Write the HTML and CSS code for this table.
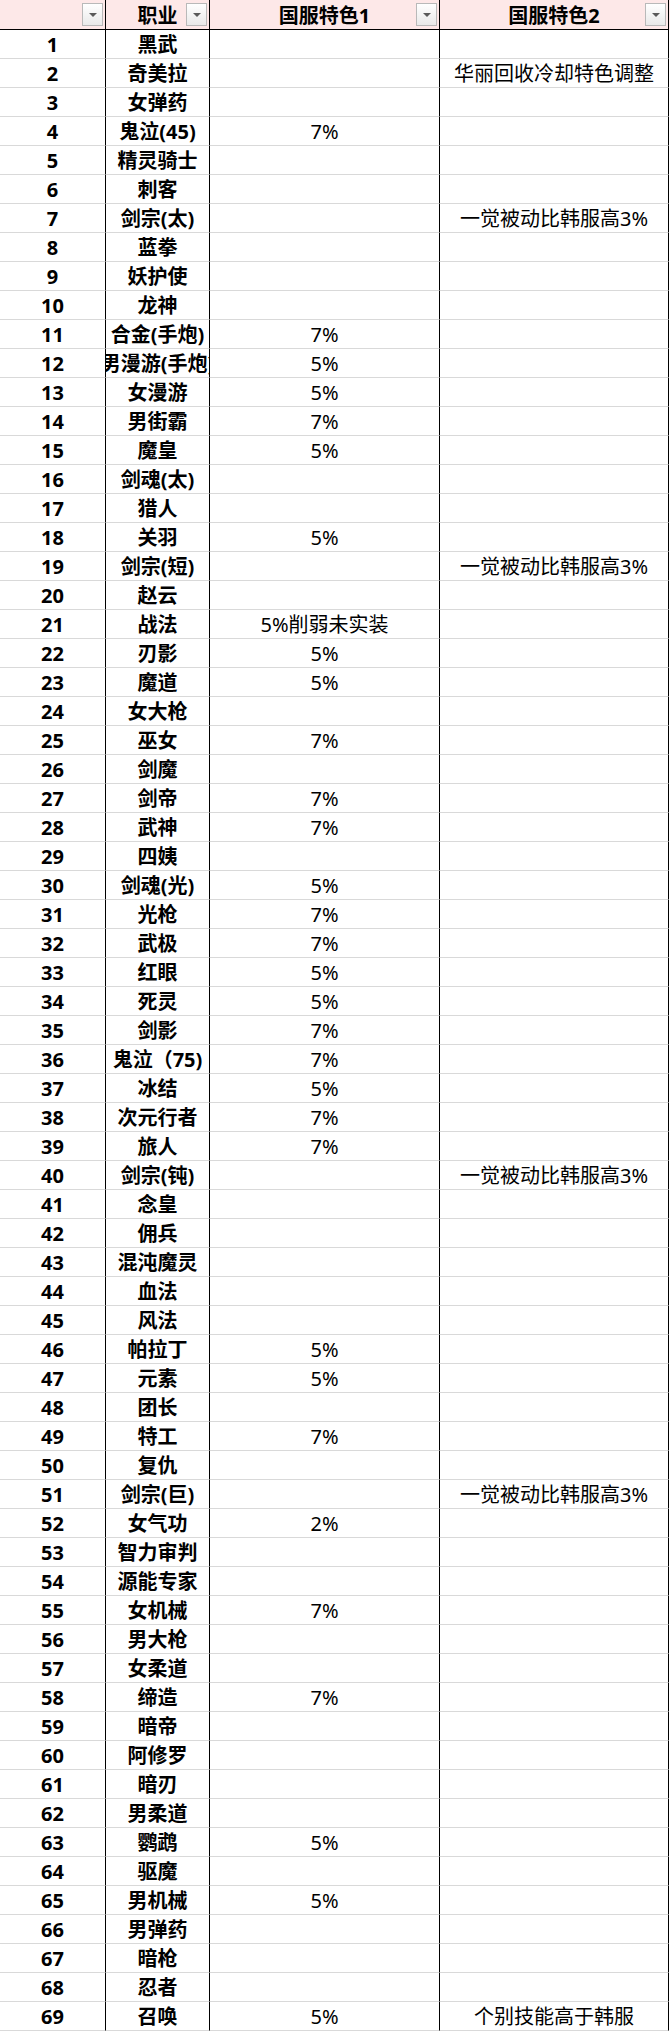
FILE: index.html
```html
<!DOCTYPE html>
<html lang="zh-CN">
<head>
<meta charset="utf-8">
<title>国服特色</title>
<link rel="stylesheet" href="styles.css">
</head>
<body>
<div class="sheet">
  <div class="row head">
    <div class="cell"><span class="filter"></span></div>
    <div class="cell">职业<span class="filter"></span></div>
    <div class="cell">国服特色1<span class="filter"></span></div>
    <div class="cell">国服特色2<span class="filter"></span></div>
  </div>
  <div class="row"><div class="cell b">1</div><div class="cell b">黑武</div><div class="cell"></div><div class="cell"></div></div>
  <div class="row"><div class="cell b">2</div><div class="cell b">奇美拉</div><div class="cell"></div><div class="cell">华丽回收冷却特色调整</div></div>
  <div class="row"><div class="cell b">3</div><div class="cell b">女弹药</div><div class="cell"></div><div class="cell"></div></div>
  <div class="row"><div class="cell b">4</div><div class="cell b">鬼泣(45)</div><div class="cell">7%</div><div class="cell"></div></div>
  <div class="row"><div class="cell b">5</div><div class="cell b">精灵骑士</div><div class="cell"></div><div class="cell"></div></div>
  <div class="row"><div class="cell b">6</div><div class="cell b">刺客</div><div class="cell"></div><div class="cell"></div></div>
  <div class="row"><div class="cell b">7</div><div class="cell b">剑宗(太)</div><div class="cell"></div><div class="cell">一觉被动比韩服高3%</div></div>
  <div class="row"><div class="cell b">8</div><div class="cell b">蓝拳</div><div class="cell"></div><div class="cell"></div></div>
  <div class="row"><div class="cell b">9</div><div class="cell b">妖护使</div><div class="cell"></div><div class="cell"></div></div>
  <div class="row"><div class="cell b">10</div><div class="cell b">龙神</div><div class="cell"></div><div class="cell"></div></div>
  <div class="row"><div class="cell b">11</div><div class="cell b">合金(手炮)</div><div class="cell">7%</div><div class="cell"></div></div>
  <div class="row"><div class="cell b">12</div><div class="cell b">男漫游(手炮)</div><div class="cell">5%</div><div class="cell"></div></div>
  <div class="row"><div class="cell b">13</div><div class="cell b">女漫游</div><div class="cell">5%</div><div class="cell"></div></div>
  <div class="row"><div class="cell b">14</div><div class="cell b">男街霸</div><div class="cell">7%</div><div class="cell"></div></div>
  <div class="row"><div class="cell b">15</div><div class="cell b">魔皇</div><div class="cell">5%</div><div class="cell"></div></div>
  <div class="row"><div class="cell b">16</div><div class="cell b">剑魂(太)</div><div class="cell"></div><div class="cell"></div></div>
  <div class="row"><div class="cell b">17</div><div class="cell b">猎人</div><div class="cell"></div><div class="cell"></div></div>
  <div class="row"><div class="cell b">18</div><div class="cell b">关羽</div><div class="cell">5%</div><div class="cell"></div></div>
  <div class="row"><div class="cell b">19</div><div class="cell b">剑宗(短)</div><div class="cell"></div><div class="cell">一觉被动比韩服高3%</div></div>
  <div class="row"><div class="cell b">20</div><div class="cell b">赵云</div><div class="cell"></div><div class="cell"></div></div>
  <div class="row"><div class="cell b">21</div><div class="cell b">战法</div><div class="cell">5%削弱未实装</div><div class="cell"></div></div>
  <div class="row"><div class="cell b">22</div><div class="cell b">刃影</div><div class="cell">5%</div><div class="cell"></div></div>
  <div class="row"><div class="cell b">23</div><div class="cell b">魔道</div><div class="cell">5%</div><div class="cell"></div></div>
  <div class="row"><div class="cell b">24</div><div class="cell b">女大枪</div><div class="cell"></div><div class="cell"></div></div>
  <div class="row"><div class="cell b">25</div><div class="cell b">巫女</div><div class="cell">7%</div><div class="cell"></div></div>
  <div class="row"><div class="cell b">26</div><div class="cell b">剑魔</div><div class="cell"></div><div class="cell"></div></div>
  <div class="row"><div class="cell b">27</div><div class="cell b">剑帝</div><div class="cell">7%</div><div class="cell"></div></div>
  <div class="row"><div class="cell b">28</div><div class="cell b">武神</div><div class="cell">7%</div><div class="cell"></div></div>
  <div class="row"><div class="cell b">29</div><div class="cell b">四姨</div><div class="cell"></div><div class="cell"></div></div>
  <div class="row"><div class="cell b">30</div><div class="cell b">剑魂(光)</div><div class="cell">5%</div><div class="cell"></div></div>
  <div class="row"><div class="cell b">31</div><div class="cell b">光枪</div><div class="cell">7%</div><div class="cell"></div></div>
  <div class="row"><div class="cell b">32</div><div class="cell b">武极</div><div class="cell">7%</div><div class="cell"></div></div>
  <div class="row"><div class="cell b">33</div><div class="cell b">红眼</div><div class="cell">5%</div><div class="cell"></div></div>
  <div class="row"><div class="cell b">34</div><div class="cell b">死灵</div><div class="cell">5%</div><div class="cell"></div></div>
  <div class="row"><div class="cell b">35</div><div class="cell b">剑影</div><div class="cell">7%</div><div class="cell"></div></div>
  <div class="row"><div class="cell b">36</div><div class="cell b">鬼泣（75)</div><div class="cell">7%</div><div class="cell"></div></div>
  <div class="row"><div class="cell b">37</div><div class="cell b">冰结</div><div class="cell">5%</div><div class="cell"></div></div>
  <div class="row"><div class="cell b">38</div><div class="cell b">次元行者</div><div class="cell">7%</div><div class="cell"></div></div>
  <div class="row"><div class="cell b">39</div><div class="cell b">旅人</div><div class="cell">7%</div><div class="cell"></div></div>
  <div class="row"><div class="cell b">40</div><div class="cell b">剑宗(钝)</div><div class="cell"></div><div class="cell">一觉被动比韩服高3%</div></div>
  <div class="row"><div class="cell b">41</div><div class="cell b">念皇</div><div class="cell"></div><div class="cell"></div></div>
  <div class="row"><div class="cell b">42</div><div class="cell b">佣兵</div><div class="cell"></div><div class="cell"></div></div>
  <div class="row"><div class="cell b">43</div><div class="cell b">混沌魔灵</div><div class="cell"></div><div class="cell"></div></div>
  <div class="row"><div class="cell b">44</div><div class="cell b">血法</div><div class="cell"></div><div class="cell"></div></div>
  <div class="row"><div class="cell b">45</div><div class="cell b">风法</div><div class="cell"></div><div class="cell"></div></div>
  <div class="row"><div class="cell b">46</div><div class="cell b">帕拉丁</div><div class="cell">5%</div><div class="cell"></div></div>
  <div class="row"><div class="cell b">47</div><div class="cell b">元素</div><div class="cell">5%</div><div class="cell"></div></div>
  <div class="row"><div class="cell b">48</div><div class="cell b">团长</div><div class="cell"></div><div class="cell"></div></div>
  <div class="row"><div class="cell b">49</div><div class="cell b">特工</div><div class="cell">7%</div><div class="cell"></div></div>
  <div class="row"><div class="cell b">50</div><div class="cell b">复仇</div><div class="cell"></div><div class="cell"></div></div>
  <div class="row"><div class="cell b">51</div><div class="cell b">剑宗(巨)</div><div class="cell"></div><div class="cell">一觉被动比韩服高3%</div></div>
  <div class="row"><div class="cell b">52</div><div class="cell b">女气功</div><div class="cell">2%</div><div class="cell"></div></div>
  <div class="row"><div class="cell b">53</div><div class="cell b">智力审判</div><div class="cell"></div><div class="cell"></div></div>
  <div class="row"><div class="cell b">54</div><div class="cell b">源能专家</div><div class="cell"></div><div class="cell"></div></div>
  <div class="row"><div class="cell b">55</div><div class="cell b">女机械</div><div class="cell">7%</div><div class="cell"></div></div>
  <div class="row"><div class="cell b">56</div><div class="cell b">男大枪</div><div class="cell"></div><div class="cell"></div></div>
  <div class="row"><div class="cell b">57</div><div class="cell b">女柔道</div><div class="cell"></div><div class="cell"></div></div>
  <div class="row"><div class="cell b">58</div><div class="cell b">缔造</div><div class="cell">7%</div><div class="cell"></div></div>
  <div class="row"><div class="cell b">59</div><div class="cell b">暗帝</div><div class="cell"></div><div class="cell"></div></div>
  <div class="row"><div class="cell b">60</div><div class="cell b">阿修罗</div><div class="cell"></div><div class="cell"></div></div>
  <div class="row"><div class="cell b">61</div><div class="cell b">暗刃</div><div class="cell"></div><div class="cell"></div></div>
  <div class="row"><div class="cell b">62</div><div class="cell b">男柔道</div><div class="cell"></div><div class="cell"></div></div>
  <div class="row"><div class="cell b">63</div><div class="cell b">鹦鹉</div><div class="cell">5%</div><div class="cell"></div></div>
  <div class="row"><div class="cell b">64</div><div class="cell b">驱魔</div><div class="cell"></div><div class="cell"></div></div>
  <div class="row"><div class="cell b">65</div><div class="cell b">男机械</div><div class="cell">5%</div><div class="cell"></div></div>
  <div class="row"><div class="cell b">66</div><div class="cell b">男弹药</div><div class="cell"></div><div class="cell"></div></div>
  <div class="row"><div class="cell b">67</div><div class="cell b">暗枪</div><div class="cell"></div><div class="cell"></div></div>
  <div class="row"><div class="cell b">68</div><div class="cell b">忍者</div><div class="cell"></div><div class="cell"></div></div>
  <div class="row"><div class="cell b">69</div><div class="cell b">召唤</div><div class="cell">5%</div><div class="cell">个别技能高于韩服</div></div>
</div>
</body>
</html>
```
FILE: styles.css
```css
html, body {
  margin: 0;
  padding: 0;
  background: #ffffff;
}
body {
  font-family: "Noto Sans", "Noto Sans CJK SC", sans-serif;
  font-size: 20px;
  color: #000000;
}
.sheet {
  width: 670px;
}
.row {
  display: grid;
  grid-template-columns: 106px 104px 230px 229px;
  height: 29px;
}
.cell {
  box-sizing: border-box;
  border-right: 1px solid #000000;
  border-bottom: 1px solid #d9d9d9;
  display: flex;
  align-items: center;
  justify-content: center;
  overflow: hidden;
  white-space: nowrap;
  line-height: 1;
  padding-top: 2px;
}
.b {
  font-weight: bold;
}
.head {
  height: 30px;
  background: #fde8e8;
}
.head .cell {
  position: relative;
  font-weight: bold;
  border-bottom: 1px solid #000000;
}
.filter {
  position: absolute;
  top: 3px;
  right: 2px;
  width: 21px;
  height: 23px;
  box-sizing: border-box;
  border: 1px solid #b9b9b9;
  background: linear-gradient(#ffffff, #e9e9e9);
}
.filter::after {
  content: "";
  position: absolute;
  left: 50%;
  top: 50%;
  margin-left: -4px;
  margin-top: -2px;
  border-left: 4px solid transparent;
  border-right: 4px solid transparent;
  border-top: 4px solid #5a5a5a;
}
```
